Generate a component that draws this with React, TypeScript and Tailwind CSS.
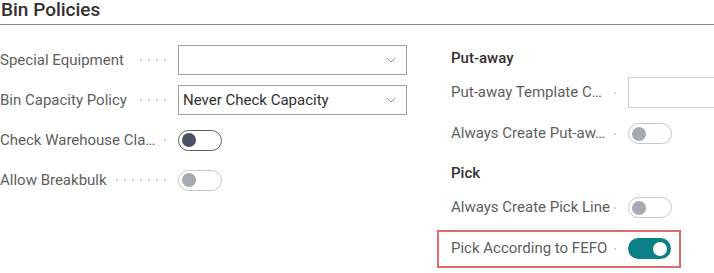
import { ChevronDown } from 'lucide-react'

function Dots({ count }: { count: number }) {
  return (
    <span className="flex shrink-0 items-center gap-[6px] pr-[12px]">
      {Array.from({ length: count }).map((_, i) => (
        <span key={i} className="block h-[2px] w-[2px] rounded-full bg-[#c8c6c4]" />
      ))}
    </span>
  )
}

function Label({ text, dots, width }: { text: string; dots: number; width: string }) {
  return (
    <div className={`flex shrink-0 items-center justify-between ${width}`}>
      <span className="whitespace-nowrap text-[#605e5c]">{text}</span>
      <Dots count={dots} />
    </div>
  )
}

function Select({ value }: { value?: string }) {
  return (
    <div className="flex h-[30px] w-[229px] shrink-0 items-center justify-between border border-[#a19f9d] bg-white pl-[4px] pr-[7px]">
      <span className="text-[#323130]">{value}</span>
      <ChevronDown size={16} strokeWidth={1} className="text-[#605e5c]" />
    </div>
  )
}

function Toggle({ state }: { state: 'off' | 'disabled' | 'on' }) {
  if (state === 'on') {
    return (
      <div className="flex h-[21px] w-[43px] shrink-0 items-center justify-end rounded-full bg-[#0b7f86] pr-[4px]">
        <span className="h-[14px] w-[14px] rounded-full bg-white" />
      </div>
    )
  }
  return (
    <div
      className={
        state === 'off'
          ? 'flex h-[21px] w-[44px] shrink-0 items-center rounded-full border border-[#605e5c] pl-[3px]'
          : 'flex h-[21px] w-[44px] shrink-0 items-center rounded-full border border-[#c8c6c4] pl-[3px]'
      }
    >
      <span className={state === 'off' ? 'h-[14px] w-[14px] rounded-full bg-[#4a5061]' : 'h-[14px] w-[14px] rounded-full bg-[#a6aab2]'} />
    </div>
  )
}

export default function App() {
  return (
    <div className="h-[273px] w-[714px] overflow-hidden bg-white font-['Roboto',sans-serif] text-[15px]">
      <h1 className="border-b border-[#8a8886] pb-[4px] pl-[1px] text-[19px] font-medium leading-[20px] text-[#323130]">Bin Policies</h1>

      <div className="flex pt-[20px]">
        <div className="flex w-[451px] shrink-0 flex-col gap-[10px]">
          <div className="flex h-[30px] items-center">
            <Label text="Special Equipment" dots={4} width="w-[178px]" />
            <Select />
          </div>
          <div className="flex h-[30px] items-center">
            <Label text="Bin Capacity Policy" dots={4} width="w-[178px]" />
            <Select value="Never Check Capacity" />
          </div>
          <div className="flex h-[30px] items-center">
            <Label text="Check Warehouse Cla…" dots={1} width="w-[178px]" />
            <Toggle state="off" />
          </div>
          <div className="flex h-[30px] items-center">
            <Label text="Allow Breakbulk" dots={7} width="w-[178px]" />
            <Toggle state="disabled" />
          </div>
        </div>

        <div className="flex min-w-0 flex-1 flex-col">
          <div className="flex h-[26px] items-center font-medium text-[#323130]">Put-away</div>
          <div className="mt-[6px] flex flex-col gap-[10px]">
            <div className="flex h-[31px] items-center">
              <Label text="Put-away Template C…" dots={1} width="w-[177px]" />
              <div className="h-[31px] w-[229px] shrink-0 border border-[#d2d0ce] bg-white" />
            </div>
            <div className="flex h-[31px] items-center">
              <Label text="Always Create Put-aw…" dots={1} width="w-[177px]" />
              <Toggle state="disabled" />
            </div>
          </div>

          <div className="mt-[11px] flex h-[26px] items-center font-medium text-[#323130]">Pick</div>
          <div className="mt-[6px] flex flex-col gap-[10px]">
            <div className="flex h-[31px] items-center">
              <Label text="Always Create Pick Line" dots={1} width="w-[177px]" />
              <Toggle state="disabled" />
            </div>
            <div className="relative flex h-[31px] items-center">
              <Label text="Pick According to FEFO" dots={1} width="w-[177px]" />
              <Toggle state="on" />
              <div className="pointer-events-none absolute -top-[3px] -bottom-[4px] -left-[14px] w-[244px] border-2 border-[#e06b6b]" />
            </div>
          </div>
        </div>
      </div>
    </div>
  )
}
